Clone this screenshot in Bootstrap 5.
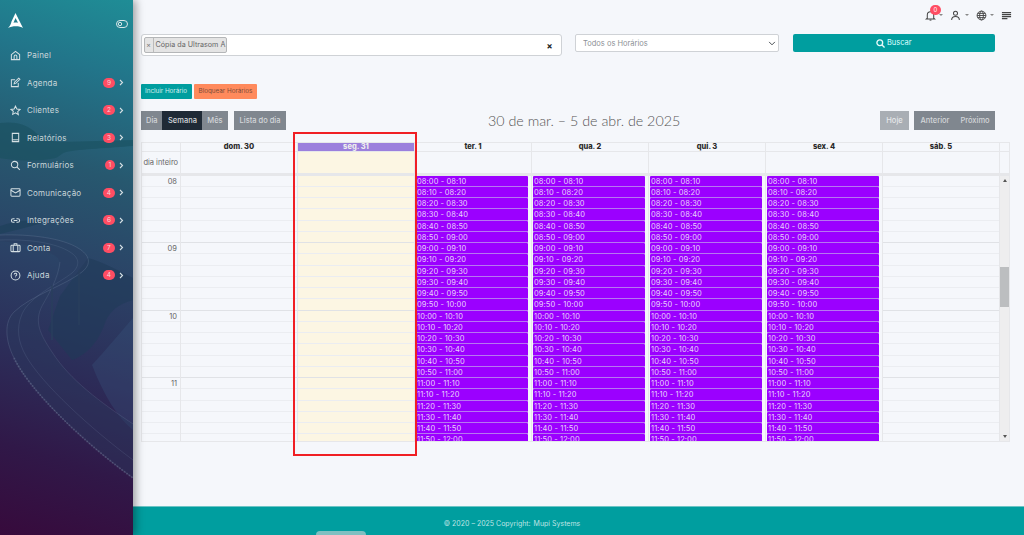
<!DOCTYPE html>
<html lang="pt-BR">

<head>
    <meta charset="UTF-8" />
    <meta name="viewport" content="width=device-width, initial-scale=1.0" />
    <title>Agenda</title>
    <link href="https://cdn.jsdelivr.net/npm/bootstrap@5.3.0/dist/css/bootstrap.min.css" rel="stylesheet" />
    <style>
        html, body { height: 535px; overflow: hidden; }
        body { background: #f5f7fb; font-family: Inter, "Open Sans", sans-serif; font-size: 8px; color: #555; }
        .app-side { width: 133px; height: 535px; position: relative; flex: none; overflow: hidden; z-index: 2;
            background: linear-gradient(197deg, #1f8d96 0%, #22758a 14%, #27586f 32%, #2b4266 50%, #2c2c58 68%, #301848 84%, #370a3c 100%);
            box-shadow: 3px 0 8px rgba(0,0,0,.35); }
        .side-art { position: absolute; left: 0; top: 0; width: 133px; height: 535px; }
        .side-top { position: relative; height: 41.5px; padding: 12px 5px 0 8px; }
        .side-nav { position: relative; }
        .side-link { height: 27.5px; padding: 0 9px 0 10px; color: #c9d6da; font-size: 8px; letter-spacing: .2px; gap: 6px; }
        .side-link svg.ico { width: 11px; height: 11px; flex: none; }
        .side-count { background: #ff4d63; color: #f5d5da; font-size: 6.5px; font-weight: 400; padding: 0; height: 10px; min-width: 10px; line-height: 10px; border-radius: 6px; }
        .wide-count { min-width: 12px; }
        .side-arrow { width: 5px; height: 7px; margin-left: -2px; }
        .app-main { width: 891px; height: 535px; position: relative; }
        .top-bar { height: 34px; padding: 8px 12px 0 0; gap: 7px; }
        .top-item { height: 14px; }
        .top-item svg { width: 11px; height: 11px; }
        .caret-mini { border-top: 2px solid #888; border-left: 2px solid transparent; border-right: 2px solid transparent; width: 0; margin-left: 3.5px; }
        .bell-count { top: -3px; left: 5.5px; width: 11px; height: 10px; border-radius: 5px; background: #ff4d63; color: #fff; font-size: 6px; line-height: 10px; text-align: center; }
        .filter-row { padding-left: 7.5px; height: 50px; }
        .chip-box { width: 421px; height: 22px; background: #fff; border: 1px solid #cfd2d6; border-radius: 3px; padding: 2px; margin-right: 13.5px; }
        .chip-tag { height: 16px; background: #e4e4e4; border: 1px solid #b4b6b8; border-radius: 2px; font-size: 7.2px; color: #666; width: 83px; white-space: nowrap; }
        .chip-x { width: 9px; border-right: 1px solid #bbb; height: 100%; color: #777; font-size: 7px; line-height: 14px; text-align: center; margin-right: 2px; }
        .chip-clear { font-size: 9px; font-weight: 700; color: #222; line-height: 1; margin-right: 6px; }
        .hour-select.form-select { width: 203.5px; height: 18px; min-height: 0; padding: 1px 16px 0 7px; font-size: 7.5px; color: #8d9196; border-radius: 2px; border-color: #cfd2d6; background-size: 8px 7px; background-position: right 2px center; margin-right: 14px; font-family: inherit; }
        .search-btn.btn { width: 202.5px; height: 18px; padding: 0; background: #009e9f; border: 0; border-radius: 2px; color: #dff; font-size: 7.5px; gap: 2px; }
        .action-row { padding-left: 7.5px; height: 27px; gap: 2.5px; }
        .act-btn.btn { height: 15px; padding: 0; font-size: 6.3px; border-radius: 1px; border: 0; line-height: 15px; white-space: nowrap; }
        .act-teal.btn { background: #009e9f; color: #d6eeee; width: 51px; }
        .act-orange.btn { background: #ff8a5c; color: #7c4a38; width: 63px; }
        .tool-row { padding: 0 29px 0 7.5px; height: 19px; margin-bottom: 11.5px; position: relative; }
        .tool-btn.btn { height: 19px; padding: 0; font-size: 7.5px; font-weight: 500; line-height: 19px; border: 0; border-radius: 0; background: #80878f; color: #d3d6d9; }
        .tool-on.btn { background: #1f2a36; color: #d8dadd; }
        .tool-dim.btn { background: #a9aeb4; color: #e6e8ea; }
        .w-dia { width: 22.5px; } .w-sem { width: 41px; } .w-mes { width: 26px; } .w-lista { width: 52px; margin-left: 6px; }
        .w-hoje { width: 29px; margin-right: 5px; } .w-ant { width: 42px; } .w-pro { width: 40px; }
        .cal-title { position: absolute; left: 355px; top: 0; font-family: Lato, Inter, sans-serif; font-size: 14.3px; font-weight: 300; line-height: 19px; color: #555; white-space: nowrap; }
        .cal-wrap { margin-left: 7.5px; width: 869px; position: relative; border: 1px solid #e6e7ea; }
        .cal-head, .cal-allday, .cal-body { display: flex; }
        .cal-head { height: 9px; border-bottom: 1px solid #e6e7ea; }
        .cal-allday { height: 24px; border-bottom: 3px solid #e6e7ea; }
        .cal-body { height: 265px; overflow: hidden; }
        .cell-axis { width: 39.5px; flex: none; border-right: 1px solid #e6e7ea; }
        .cell-day { width: 117px; flex: none; border-right: 1px solid #e6e7ea; }
        .cell-bar { width: 9px; flex: none; }
        .cal-head .cell-day { font-size: 7.5px; font-weight: 800; color: #2a2a2a; line-height: 8.5px; text-align: center; }
        .cal-head .head-today.cell-day { background: #9b7fdd; color: #eee; }
        .allday-label { font-size: 7.5px; line-height: 22px; color: #666; text-align: center; white-space: nowrap; }
        .cell-today { background: #fcf6e3; }
        .slot-row { height: 11.25px; border-bottom: 1px solid #ebedf1; }
        .slot-row.hour-end { border-bottom-color: #e0e2e6; }
        .axis-hour { font-size: 7.5px; line-height: 11.5px; color: #666; text-align: right; padding-right: 3px; }
        .slot-chip { margin: 0 3px 0 1px; height: 11.25px; background: #9b00ff; border-bottom: 1px solid #b678f0; color: #e8d2fb; font-size: 7.5px; line-height: 11px; padding-left: 1px; white-space: nowrap; overflow: hidden; letter-spacing: .1px; border-radius: 1px; }
        .cell-bar.scroll-col { background: #eeeeef; position: relative; display: flex; flex-direction: column; align-items: center; }
        .scroll-thumb { position: absolute; left: 0; top: 91.5px; width: 9px; height: 40px; background: #bcbec0; }
        .scroll-up { border-bottom: 3px solid #555; border-left: 2px solid transparent; border-right: 2px solid transparent; margin-top: 3px; }
        .scroll-down { border-top: 3px solid #555; border-left: 2px solid transparent; border-right: 2px solid transparent; position: absolute; bottom: 3px; }
        .red-frame { position: absolute; left: 151.5px; top: -11px; width: 124px; height: 324px; border: 2px solid #f01f24; pointer-events: none; }
        .app-foot { position: absolute; left: 0; right: 0; bottom: 0; height: 29px; background: #009e9f; border-top: 1px solid #6cc4c5; color: #bfe4e4; font-size: 7px; padding: 12px 133px 0 0; text-align: center; }
        .app-foot span { margin-left: 1px; }
        .foot-tab { position: absolute; left: 183px; bottom: -7px; width: 50px; height: 11px; background: #7fc0c1; border-radius: 4px; }
    </style>
</head>

<body class="d-flex">
    <aside class="app-side">
        <svg class="side-art" viewBox="0 0 133 535" fill="none">
            <!-- island and far shore -->
            <path d="M0 123C14 121 26 124 34 131C40 137 46 141 60 142C85 141 110 141 133 140V146C110 148 80 149 66 152C58 155 60 158 50 159C30 162 12 160 0 158Z" fill="#19505f" opacity=".6"/>
            <path d="M0 226C14 221 30 219 44 222C34 226 16 230 0 234Z" fill="#1d3f58" opacity=".6"/>
            <!-- hillside under the road -->
            <path d="M88 258C104 262 120 272 133 278V300C118 304 108 312 104 326C96 346 84 356 72 360L48 330L60 296Z" fill="#1f3a58" opacity=".55"/>
            <path d="M92 365C106 350 118 335 133 318V430C118 418 104 396 92 365Z" fill="#3d5f86" opacity=".25"/>
            <!-- road deck -->
            <path d="M0 235C30 234 62 238 78 248C90 255 92 264 82 272C66 285 30 296 14 312C4 322 5 340 14 358C28 388 80 440 133 478V424C100 402 70 380 52 352C40 334 34 322 42 306C50 292 62 278 60 262C58 252 30 244 0 241Z" fill="#2a3c60" opacity=".4"/>
            <path d="M0 235C30 234 62 238 78 248C90 255 92 264 82 272C66 285 30 296 14 312C4 322 5 340 14 358C28 388 80 440 133 478" stroke="#8fa4bd" stroke-opacity=".2"/>
            <path d="M0 240C30 239 56 243 70 252C80 258 80 266 72 273C58 284 30 296 22 314C16 328 18 342 26 356C42 384 90 428 133 460" stroke="#8fa4bd" stroke-opacity=".14"/>
            <path d="M60 262C58 278 50 292 42 306C34 322 40 334 52 352C70 380 100 402 133 424" stroke="#8fa4bd" stroke-opacity=".16"/>
            <path d="M14 358C28 388 80 440 133 478" stroke="#9db0c6" stroke-opacity=".22" stroke-width="2" stroke-dasharray="1.5 1.5"/>
            <path d="M52 285V340M79 270V325" stroke="#2a3f5c" stroke-opacity=".7" stroke-width="2"/>
        </svg>
        <div class="side-top d-flex justify-content-between align-items-start">
            <svg width="15" height="17" viewBox="0 0 15 17" fill="#fff" fill-rule="evenodd"><path d="M7.500 1L15 16C12 13.500 4 13.500 0 16C2 14 3 12 3.500 9.500ZM7.500 6L5.500 10.800C7 10.500 8.500 10.500 10 10.800Z"/></svg>
            <svg class="mt-2" width="12" height="8" viewBox="0 0 12 8" fill="none" stroke="#d8e6e8"><rect x=".5" y=".5" width="11" height="7" rx="3.5"/><circle cx="4" cy="4" r="1.7"/></svg>
        </div>
        <nav class="side-nav nav flex-column" id="sideNav"></nav>
    </aside>

    <main class="app-main">
        <div class="top-bar d-flex justify-content-end align-items-start">
            <div class="top-item d-flex align-items-center position-relative">
                <svg viewBox="0 0 12 12" fill="none" stroke="#444" stroke-width="1.100"><path d="M2.500 9V5.500a3.500 3.500 0 0 1 7 0V9l1 .8h-9Z"/><path d="M5 11h2"/></svg>
                <span class="bell-count position-absolute">0</span><i class="caret-mini"></i>
            </div>
            <div class="top-item d-flex align-items-center">
                <svg viewBox="0 0 12 12" fill="none" stroke="#444" stroke-width="1.100"><circle cx="6" cy="3.600" r="2.200"/><path d="M1.800 11c0-3 2-4 4.200-4s4.200 1 4.200 4"/></svg><i class="caret-mini"></i>
            </div>
            <div class="top-item d-flex align-items-center">
                <svg viewBox="0 0 12 12" fill="none" stroke="#444" stroke-width="1"><circle cx="6" cy="6" r="4.800"/><ellipse cx="6" cy="6" rx="2.100" ry="4.800"/><path d="M1.200 6h9.600M1.800 3.700h8.400M1.800 8.300h8.400"/></svg><i class="caret-mini"></i>
            </div>
            <div class="top-item d-flex align-items-center">
                <svg viewBox="0 0 12 12" fill="none" stroke="#444" stroke-width="1.300"><path d="M1 2.800h10M1 5h10M1 7.200h10M1 9.400h6"/></svg>
            </div>
        </div>

        <div class="filter-row d-flex align-items-start">
            <div class="chip-box d-flex align-items-center justify-content-between">
                <div class="chip-tag d-flex align-items-center"><span class="chip-x">×</span>Cópia da Ultrasom A</div>
                <span class="chip-clear">×</span>
            </div>
            <select class="form-select hour-select"><option>Todos os Horários</option></select>
            <button class="btn search-btn d-flex align-items-center justify-content-center">
                <svg width="9" height="9" viewBox="0 0 10 10" fill="none" stroke="#e8fafa" stroke-width="1.500"><circle cx="4.200" cy="4.200" r="3.200"/><path d="M6.700 6.700L9.500 9.500"/></svg>Buscar
            </button>
        </div>

        <div class="action-row d-flex align-items-start">
            <button class="btn act-btn act-teal">Incluir Horário</button>
            <button class="btn act-btn act-orange">Bloquear Horários</button>
        </div>

        <div class="tool-row d-flex justify-content-between">
            <div class="d-flex">
                <div class="btn-group">
                    <button class="btn tool-btn w-dia">Dia</button>
                    <button class="btn tool-btn tool-on w-sem">Semana</button>
                    <button class="btn tool-btn w-mes">Mês</button>
                </div>
                <button class="btn tool-btn w-lista">Lista do dia</button>
            </div>
            <div class="cal-title">30 de mar. – 5 de abr. de 2025</div>
            <div class="d-flex">
                <button class="btn tool-btn tool-dim w-hoje">Hoje</button>
                <div class="btn-group">
                    <button class="btn tool-btn w-ant">Anterior</button>
                    <button class="btn tool-btn w-pro">Próximo</button>
                </div>
            </div>
        </div>

        <div class="cal-wrap">
            <div class="cal-head" id="calHead"></div>
            <div class="cal-allday" id="calAllday"></div>
            <div class="cal-body" id="calBody"></div>
            <div class="red-frame"></div>
        </div>

        <footer class="app-foot">© 2020 – 2025 Copyright: <span>Mupi Systems</span><div class="foot-tab"></div></footer>
    </main>

    <script src="https://cdn.jsdelivr.net/npm/bootstrap@5.3.0/dist/js/bootstrap.bundle.min.js"></script>
    <script>
        const icons = {
            home: '<path d="M1.500 5L6 1.500 10.500 5v5.500h-9Z"/><path d="M4.500 10.500V7a1.500 1.500 0 0 1 3 0v3.500"/>',
            edit: '<path d="M9 6.500v4H1.500V3h4"/><path d="M4.500 7.500l.4-1.800L9.500 1.200l1.300 1.300L6.300 7Z"/>',
            star: '<path d="M6 1.200l1.500 3.200 3.500.4-2.600 2.400.7 3.400L6 8.500l-3.100 1.700.7-3.400L1 4.800l3.500-.4Z"/>',
            book: '<path d="M2.500 1.500h7v9h-7Z"/><path d="M2.500 8.500h7"/>',
            search: '<circle cx="5" cy="5" r="3.500"/><path d="M7.700 7.700l3 3"/>',
            mail: '<rect x="1" y="2" width="10" height="8" rx="1"/><path d="M1 3.500l5 3 5-3"/>',
            link: '<path d="M5 4H3.500a2 2 0 0 0 0 4H5M7 4h1.500a2 2 0 0 1 0 4H7M4 6h4"/>',
            case: '<rect x="1" y="3.500" width="10" height="7" rx="1"/><path d="M4.500 3.500V1.800h3v1.700M3.500 3.500v7M8.500 3.500v7"/>',
            help: '<circle cx="6" cy="6" r="4.800"/><path d="M4.600 4.800a1.400 1.400 0 1 1 2 1.300c-.4.300-.6.600-.6 1M6 8.400v.4"/>'
        };
        const menu = [
            ["home", "Painel", null], ["edit", "Agenda", 9], ["star", "Clientes", 2],
            ["book", "Relatórios", 3], ["search", "Formulários", 1], ["mail", "Comunicação", 4],
            ["link", "Integrações", 6], ["case", "Conta", 7], ["help", "Ajuda", 4]
        ];
        document.getElementById("sideNav").innerHTML = menu.map(([ic, label, n]) =>
            `<a class="side-link d-flex align-items-center text-decoration-none">
                <svg class="ico" viewBox="0 0 12 12" fill="none" stroke="#d5e0e4" stroke-width="1.100">${icons[ic]}</svg>
                <span class="flex-grow-1">${label}</span>
                ${n ? `<span class="side-count badge ${n === 1 ? "" : "wide-count"}">${n}</span>
                <svg class="side-arrow" viewBox="0 0 5 7" fill="none" stroke="#d5e0e4" stroke-width="1.100"><path d="M1 1l2.500 2.500L1 6"/></svg>` : ""}
            </a>`).join("");

        const days = ["dom. 30", "seg. 31", "ter. 1", "qua. 2", "qui. 3", "sex. 4", "sáb. 5"];
        document.getElementById("calHead").innerHTML = '<div class="cell-axis"></div>' +
            days.map((d, i) => `<div class="cell-day ${i === 1 ? "head-today" : ""}">${d}</div>`).join("") + '<div class="cell-bar"></div>';
        document.getElementById("calAllday").innerHTML = '<div class="cell-axis allday-label">dia inteiro</div>' +
            days.map((d, i) => `<div class="cell-day ${i === 1 ? "cell-today" : ""}"></div>`).join("") + '<div class="cell-bar"></div>';

        const pad = n => String(n).padStart(2, "0");
        const labels = [];
        for (let t = 8 * 60; t < 12 * 60; t += 10) {
            const e = t + 10;
            labels.push(`${pad(Math.floor(t / 60))}:${pad(t % 60)} - ${pad(Math.floor(e / 60))}:${pad(e % 60)}`);
        }
        const cls = i => "slot-row" + (i % 6 === 5 ? " hour-end" : "");
        let body = '<div class="cell-axis">' + labels.map((l, i) =>
            `<div class="${cls(i)} axis-hour">${i % 6 === 0 ? l.slice(0, 2) : ""}</div>`).join("") + "</div>";
        days.forEach((d, di) => {
            const open = di >= 2 && di <= 5;
            body += `<div class="cell-day ${di === 1 ? "cell-today" : ""}">` + labels.map((l, i) => open
                ? `<div class="slot-chip">${l}</div>`
                : `<div class="${cls(i)}"></div>`).join("") + "</div>";
        });
        body += '<div class="cell-bar scroll-col"><i class="scroll-up"></i><div class="scroll-thumb"></div><i class="scroll-down"></i></div>';
        document.getElementById("calBody").innerHTML = body;
    </script>
</body>

</html>
